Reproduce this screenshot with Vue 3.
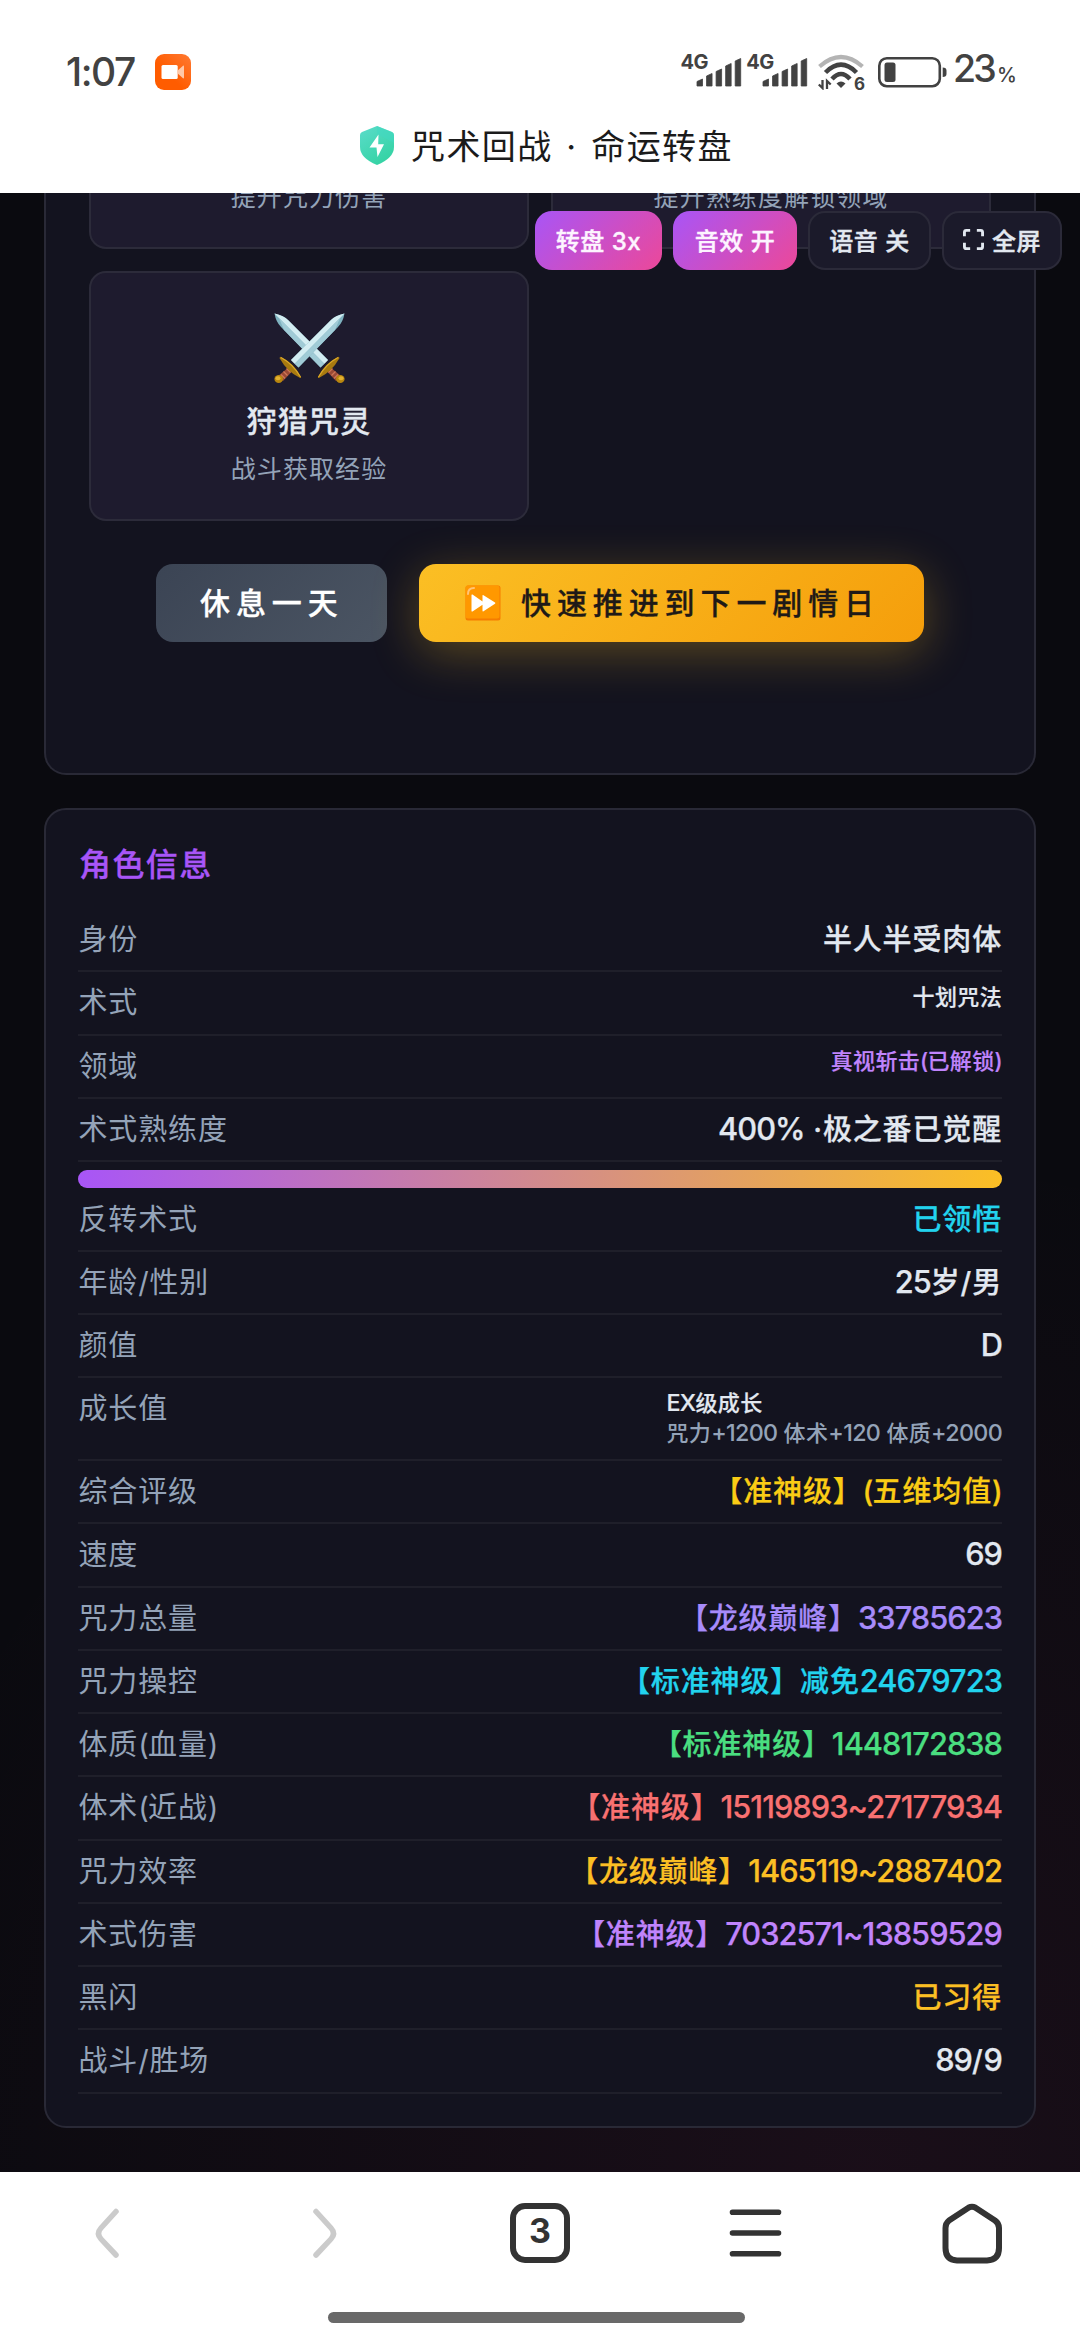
<script setup>
const rows = [
  { label: '身份', value: '半人半受肉体' },
  { label: '术式', value: '十划咒法', small: true },
  { label: '领域', value: '真视斩击(已解锁)', tone: 'violet', small: true },
  { label: '术式熟练度', value: '400% ·极之番已觉醒', progress: 100 },
  { label: '反转术式', value: '已领悟', tone: 'cyan' },
  { label: '年龄/性别', value: '25岁/男' },
  { label: '颜值', value: 'D' },
  { label: '成长值', value: 'EX级成长', note: '咒力+1200 体术+120 体质+2000', small: true },
  { label: '综合评级', value: '【准神级】(五维均值)', tone: 'yellow' },
  { label: '速度', value: '69' },
  { label: '咒力总量', value: '【龙级巅峰】33785623', tone: 'indigo' },
  { label: '咒力操控', value: '【标准神级】减免24679723', tone: 'cyan' },
  { label: '体质(血量)', value: '【标准神级】1448172838', tone: 'green' },
  { label: '体术(近战)', value: '【准神级】15119893~27177934', tone: 'red' },
  { label: '咒力效率', value: '【龙级巅峰】1465119~2887402', tone: 'amber' },
  { label: '术式伤害', value: '【准神级】7032571~13859529', tone: 'violet' },
  { label: '黑闪', value: '已习得', tone: 'amber' },
  { label: '战斗/胜场', value: '89/9' },
]
const bars = [7.5, 13, 17.5, 23, 28]

// Latin letters and digits are set slightly larger and tighter than the Chinese text.
const runs = (text) =>
  text
    .split(/([0-9A-Z~%+]+|[()])/)
    .filter(Boolean)
    .map((part) => ({
      part,
      kind: /^[0-9A-Z~%+]/.test(part) ? 'latin' : /^[()]/.test(part) ? 'paren' : '',
    }))
</script>

<template>
  <div class="screen">
    <header class="top">
      <div class="status">
        <span class="clock">1:07</span>
        <svg class="rec" width="36" height="36" viewBox="0 0 36 36">
          <defs>
            <linearGradient id="rec" x1="1" y1="0" x2="0" y2="1">
              <stop offset="0" stop-color="#ff7a33" /><stop offset="0.6" stop-color="#ff5c00" />
            </linearGradient>
          </defs>
          <rect width="36" height="36" rx="9" fill="url(#rec)" />
          <rect x="6.5" y="11" width="16.2" height="14" rx="1.5" fill="#fff" />
          <path d="M22.7 16.5 28 11.8q1-.6 1 .6v11.2q0 1.200-1 .6L22.700 19.500Z" fill="#ffc9a8" />
        </svg>
        <div class="indicators">
          <div v-for="n in 2" :key="n" class="signal">
            <span class="net">4G</span>
            <svg width="46" height="30" viewBox="0 0 46 30">
              <path
                v-for="(h, i) in bars"
                :key="i"
                :d="`M${1 + i * 9.55} 29V${32 - h}l5.500 -2.500V29z`"
                fill="#424242"
                stroke="#424242"
                stroke-width="0.8"
                stroke-linejoin="round"
              />
            </svg>
          </div>
          <div class="wifi">
            <svg width="46" height="36" viewBox="0 0 46 36" fill="none">
              <path d="M1.500 12.500Q23 -6.500 44.500 12.500" stroke="#b4b4b4" stroke-width="4.200" />
              <path d="M7.500 18.500Q23 3 38.500 18.500" stroke="#424242" stroke-width="4.500" />
              <path d="M14 25Q23 15 32 25" stroke="#424242" stroke-width="4.500" />
              <path d="M18.500 29.500Q23 25.500 27.500 29.500L23 34Z" fill="#424242" />
              <path d="M4.500 26V34L.8 30.500M9 35V27l3.700 3.500" stroke="#424242" stroke-width="2.300" />
            </svg>
            <b>6</b>
          </div>
          <svg class="battery" width="70" height="32" viewBox="0 0 70 32">
            <rect x="1.300" y="2.200" width="60.500" height="28" rx="7.500" fill="none" stroke="#424242" stroke-width="2.600" />
            <rect x="6.500" y="6.500" width="11" height="19.500" rx="2.500" fill="#424242" />
            <path d="M64.700 11.500q3.800 0 3.800 3v3.500q0 3-3.800 3z" fill="#424242" />
          </svg>
          <span class="level">23<small>%</small></span>
        </div>
      </div>
      <div class="page-title">
        <svg width="34" height="39" viewBox="0 0 34 39">
          <defs>
            <linearGradient id="shield" x1="0" y1="0" x2="0.600" y2="1">
              <stop offset="0" stop-color="#5bdccb" /><stop offset="1" stop-color="#35d3a4" />
            </linearGradient>
          </defs>
          <path d="M17 0 32 6q2 .8 2 3v12q0 11-17 18Q0 32 0 21V9Q0 6.800 2 6Z" fill="url(#shield)" />
          <path d="M17 0 32 6q2 .8 2 3v8L17 8Z" fill="#41d8c1" opacity=".55" />
          <path d="M18.500 8.500 9.500 21.500H16.500L17.500 31 24 18.200H18.200Z" fill="#fff" />
        </svg>
        <span>咒术回战 · 命运转盘</span>
      </div>
    </header>

    <main class="page">
      <nav class="toolbar">
        <button class="pill on p1">转盘 3x</button>
        <button class="pill on p2">音效 开</button>
        <button class="pill p3">语音 关</button>
        <button class="pill p4">
          <svg width="21" height="21" viewBox="0 0 22 22" fill="none" stroke="#e2e8f0" stroke-width="3">
            <path d="M1.500 7.500v-4q0-2 2-2h4M14.500 1.500h4q2 0 2 2v4M20.500 14.500v4q0 2-2 2h-4M7.500 20.500h-4q-2 0-2-2v-4" />
          </svg>
          全屏
        </button>
      </nav>

      <section class="panel actions">
        <div class="cards">
          <article class="card cut"><p>提升咒力伤害</p></article>
          <article class="card cut"><p>提升熟练度解锁领域</p></article>
          <article class="card">
            <svg class="swords" width="71" height="71" viewBox="0 0 71 71">
              <defs>
                <g id="sword">
                  <path d="M70.500 .5Q61 2.500 57 7L17 47l7.500 7.500L64 14Q69 9 70.500 .5Z" fill="#7fb3c0" />
                  <path d="M70.500 .5Q61 2.500 57 7L17 47l3.700 3.700Z" fill="#d3edf2" />
                  <path d="M20.700 50.700 66 5l-5 12-36.500 37.500Z" fill="#a0cbd6" />
                  <path d="m15 54 3.700 3.700L9 68l-5-5Z" fill="#9b4a35" />
                  <path d="m12.500 55.500 4 4M9.500 58.500l4 4M7 61.500l4 4" stroke="#cf7657" stroke-width="1.300" />
                  <path d="M6.500 43.800Q20 50 27 64q.5 1.500-1.300.8Q13 58.500 5.800 45.500q-.5-1.500.7-1.700Z" fill="#a87a10" />
                  <path d="M7 44.500Q19 51 26.500 64" stroke="#dba92a" stroke-width="1.200" fill="none" />
                  <ellipse cx="4.700" cy="66" rx="4.300" ry="4" fill="#b8860f" />
                  <ellipse cx="4" cy="65.200" rx="2.500" ry="2" fill="#e3b130" />
                </g>
              </defs>
              <use href="#sword" transform="matrix(-1 0 0 1 71 0)" />
              <use href="#sword" />
            </svg>
            <h3>狩猎咒灵</h3>
            <p>战斗获取经验</p>
          </article>
        </div>
        <div class="buttons">
          <button class="btn rest"><span>休息一天</span></button>
          <button class="btn skip">
            <svg width="36" height="36" viewBox="0 0 36 36">
              <rect x=".5" y=".5" width="35" height="35" rx="2.500" fill="#f57c00" />
              <rect x=".5" y=".5" width="34" height="33" rx="2.500" fill="#ff9800" />
              <path d="M3 9q0-6 6-6" stroke="#ffc477" stroke-width="2" fill="none" stroke-linecap="round" />
              <path d="M6.500 10q0-1 1-.4l10 7v-6q0-1 1-.4l11.500 7.300q.8.600 0 1.200l-11.500 7.600q-1 .5-1-.5v-6l-10 6.600q-1 .5-1-.5Z" fill="#fff" />
            </svg>
            <span>快速推进到下一剧情日</span>
          </button>
        </div>
      </section>

      <section class="panel info">
        <h2>角色信息</h2>
        <template v-for="row in rows" :key="row.label">
          <div class="row" :class="{ tall: row.note }">
            <span class="label"><span v-for="(r, i) in runs(row.label)" :key="i" :class="r.kind">{{ r.part }}</span></span>
            <span class="value" :class="[row.tone, { small: row.small }]">
              <span v-for="(r, i) in runs(row.value)" :key="i" :class="r.kind">{{ r.part }}</span>
              <em v-if="row.note"><span v-for="(r, i) in runs(row.note)" :key="i" :class="r.kind">{{ r.part }}</span></em>
            </span>
          </div>
          <div v-if="row.progress" class="track">
            <div class="fill" :style="{ width: row.progress + '%' }"></div>
          </div>
        </template>
      </section>
    </main>

    <footer class="bottom">
      <div class="nav">
        <svg width="60" height="62" viewBox="0 0 60 62" fill="none" stroke="#cbcbcb" stroke-width="5.500" stroke-linecap="round">
          <path d="M38 9.500 23 26q-5 5.500 0 11L38 53" />
        </svg>
        <svg width="60" height="62" viewBox="0 0 60 62" fill="none" stroke="#cbcbcb" stroke-width="5.500" stroke-linecap="round">
          <path d="M22 9.500 37 26q5 5.500 0 11L22 53" />
        </svg>
        <div class="tabs">3</div>
        <svg width="60" height="62" viewBox="0 0 60 62" fill="none" stroke="#333" stroke-width="5.600" stroke-linecap="round">
          <path d="M6.500 10.300H52.500M6.500 31H52.500M6.500 51.700H52.500" />
        </svg>
        <svg width="60" height="62" viewBox="0 0 60 62" fill="none" stroke="#333" stroke-width="6" stroke-linejoin="round">
          <path d="M26.500 5.700q3.500-2 7 0L53 18.500q4 2.800 4 7.500V46q0 12-12 12.500H15Q3.500 58 3.500 46V26q0-4.700 3.500-7.500Z" />
        </svg>
      </div>
      <div class="handle"></div>
    </footer>
  </div>
</template>

<style>
body {
  margin: 0;
  background: #fff;
}
</style>

<style scoped>
* {
  box-sizing: border-box;
}
.screen {
  width: 1080px;
  height: 2339px;
  display: flex;
  flex-direction: column;
  overflow: hidden;
  font-family: Inter, 'Noto Sans CJK SC', sans-serif;
  text-spacing-trim: space-all;
  white-space: nowrap;
}
h2,
h3,
p {
  margin: 0;
}
button {
  border: 0;
  padding: 0;
  font-family: inherit;
}
.top {
  height: 193px;
  flex: none;
  background: #fff;
}
.status {
  height: 108px;
  padding: 36px 66px 0 66px;
  display: flex;
  align-items: center;
  color: #424242;
}
.clock {
  width: 89px;
  font-size: 39px;
  font-weight: 500;
  letter-spacing: -1.500px;
  line-height: 36px;
}
.indicators {
  margin-left: auto;
  display: flex;
  align-items: center;
}
.signal {
  width: 65.800px;
  height: 36px;
  display: flex;
  align-items: flex-end;
}
.signal svg {
  margin-left: -12px;
  margin-bottom: 3px;
  flex: none;
}
.net {
  width: 28px;
  align-self: flex-start;
  font-size: 20px;
  line-height: 16px;
  font-weight: 700;
  letter-spacing: -0.500px;
}
.wifi {
  position: relative;
  width: 46px;
  height: 36px;
  margin-left: 6px;
}
.wifi b {
  position: absolute;
  right: -1px;
  bottom: -1px;
  font-size: 17px;
  line-height: 14px;
}
.battery {
  margin-left: 14px;
  flex: none;
}
.level {
  width: 61px;
  margin-left: 5px;
  font-size: 37.500px;
  font-weight: 500;
  line-height: 36px;
  letter-spacing: -2.800px;
}
.level small {
  font-size: 20px;
  margin-left: 3px;
}
.page-title {
  display: flex;
  align-items: center;
  height: 74px;
  padding-left: 360px;
  gap: 17px;
  font-size: 34px;
  letter-spacing: 1.400px;
  word-spacing: 2.800px;
  color: #1b1b1b;
}
.page-title span {
  padding-bottom: 2px;
}
.page {
  position: relative;
  height: 1979px;
  flex: none;
  overflow: hidden;
  padding: 0 44px;
  background:
    radial-gradient(circle at 80% 100%, rgba(236, 72, 153, 0.070), transparent 48%),
    #0a0a0f;
}
.panel {
  background: #13131f;
  border: 2px solid #292936;
}
.actions {
  height: 582px;
  padding: 0 43px;
  border-top: 0;
  border-radius: 0 0 22px 22px;
}
.cards {
  display: grid;
  grid-template-columns: 440px 440px;
  gap: 22px;
}
.card {
  height: 250px;
  padding-top: 40px;
  border: 2px solid #2c2b3a;
  border-radius: 17px;
  background: #1e1b2e;
  display: flex;
  flex-direction: column;
  align-items: center;
}
.card.cut {
  height: 56px;
  padding-top: 0;
  border-top: 0;
  border-radius: 0 0 17px 17px;
}
.card.cut p {
  margin-top: -15px;
}
.card h3 {
  margin-top: 15px;
  font-size: 30px;
  line-height: 44px;
  letter-spacing: 1.300px;
  font-weight: 500;
  -webkit-text-stroke: 0.300px;
  color: #e2e8f0;
}
.card p {
  margin-top: 7px;
  font-size: 25px;
  line-height: 38px;
  letter-spacing: 1.100px;
  color: #94a3b8;
}
.buttons {
  margin: 42.500px 0 0 67px;
  display: flex;
  gap: 32px;
}
.btn {
  height: 78px;
  padding: 0 0 0 44px;
  display: flex;
  align-items: center;
  border-radius: 17px;
  font-size: 30px;
  letter-spacing: 5.900px;
  font-weight: 500;
  -webkit-text-stroke: 0.300px;
}
.btn span {
  padding-bottom: 3px;
}
.rest {
  width: 231px;
  color: #fff;
  background: linear-gradient(135deg, #3b4454, #4b5563);
}
.skip {
  width: 505px;
  padding-left: 46px;
  gap: 20px;
  color: #1f1a17;
  background: linear-gradient(135deg, #fbbf24, #f59e0b);
  box-shadow: 0 11px 48px rgba(251, 191, 36, 0.300);
}
.toolbar {
  position: absolute;
  top: 18px;
  right: 18px;
  display: flex;
  gap: 11px;
}
.pill {
  height: 59px;
  padding-bottom: 2px;
  display: flex;
  align-items: center;
  justify-content: center;
  gap: 8px;
  border: 2px solid #2b2a39;
  border-radius: 17px;
  background: #1b1a2a;
  color: #e2e8f0;
  font-size: 24px;
  font-weight: 500;
  -webkit-text-stroke: 0.400px;
  letter-spacing: 0.500px;
}
.pill.on {
  border: 0;
  color: #fdf4ff;
  background: linear-gradient(135deg, #a855f7, #ec4899);
}
.p1 {
  width: 127px;
}
.p2 {
  width: 124px;
}
.p3 {
  width: 123px;
}
.p4 {
  width: 120px;
}
.info {
  margin-top: 33px;
  height: 1320px;
  padding: 32px 32px 0;
  border-radius: 22px;
}
h2 {
  height: 67px;
  padding-left: 1px;
  font-size: 32px;
  line-height: 46px;
  letter-spacing: 1.400px;
  font-weight: 500;
  -webkit-text-stroke: 0.300px;
  color: #a855f7;
}
.row {
  height: 63.280px;
  padding: 11px 0;
  display: flex;
  justify-content: space-between;
  align-items: flex-start;
  border-bottom: 2px solid #1f1f2a;
  font-size: 29px;
  line-height: 39.500px;
  letter-spacing: 0.850px;
}
.row.tall {
  height: 82.700px;
}
.label {
  padding-left: 0.500px;
  color: #94a3b8;
}
.value {
  font-weight: 500;
  -webkit-text-stroke: 0.250px;
  color: #e2e8f0;
}
.value.small {
  margin-top: -1px;
  font-size: 22px;
  line-height: 30px;
  letter-spacing: 0.350px;
  -webkit-text-stroke: 0.200px;
}
.latin {
  font-size: 1.060em;
  line-height: 1;
  letter-spacing: -0.950px;
}
.small .latin {
  letter-spacing: -0.700px;
}
.paren {
  letter-spacing: -0.700px;
}
.value em {
  display: block;
  font-style: normal;
  color: #94a3b8;
  -webkit-text-stroke: 0;
}
.value.violet {
  color: #c084fc;
}
.value.indigo {
  color: #a78bfa;
}
.value.cyan {
  color: #22d3ee;
}
.value.yellow {
  color: #facc15;
}
.value.green {
  color: #4ade80;
}
.value.red {
  color: #f87171;
}
.value.amber {
  color: #fbbf24;
}
.track {
  height: 18px;
  margin: 8px 0 0.500px;
  border-radius: 9px;
  background: #1e1b2e;
}
.fill {
  height: 100%;
  border-radius: 9px;
  background: linear-gradient(90deg, #a855f7, #fbbf24);
}
.bottom {
  height: 167px;
  flex: none;
  background: #fff;
  display: flex;
  flex-direction: column;
  align-items: center;
}
.nav {
  width: 1080px;
  height: 122px;
  display: flex;
  justify-content: space-around;
  align-items: center;
}
.tabs {
  width: 60px;
  height: 60px;
  border: 6px solid #333;
  border-radius: 15px;
  text-align: center;
  font-size: 34px;
  line-height: 44px;
  font-weight: 700;
  color: #333;
}
.handle {
  width: 417px;
  height: 11px;
  margin: 18px 7px 0 0;
  border-radius: 6px;
  background: #696969;
}
</style>
